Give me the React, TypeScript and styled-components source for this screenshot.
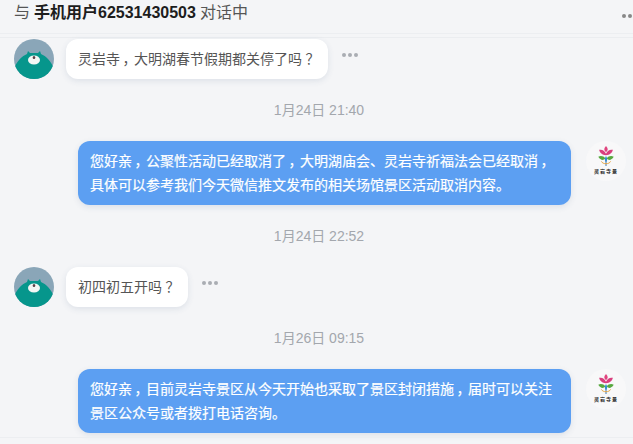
import React from 'react'
import styled, { createGlobalStyle } from 'styled-components'

const GlobalStyle = createGlobalStyle`
  html, body {
    margin: 0;
    padding: 0;
    background: #f4f5f7;
  }
  * {
    box-sizing: border-box;
  }
`

const Page = styled.div`
  position: relative;
  width: 633px;
  height: 444px;
  overflow: hidden;
  background: #f4f5f7;
  font-family: 'Liberation Sans', 'Noto Sans CJK SC', sans-serif;
  display: flex;
  flex-direction: column;
`

const Header = styled.div`
  height: 38px;
  flex: none;
  display: flex;
  align-items: flex-start;
  justify-content: space-between;
  padding: 3px 0 0 14px;
  border-bottom: 1px solid #ebedf0;
  box-shadow: inset 0 -3px 0 #f4f5f7, inset 0 -4px 0 #eceef1;
`

const Title = styled.div`
  font-size: 16px;
  line-height: 20px;
  color: #555;
  b {
    color: #1d1d1d;
    font-weight: 700;
    margin: 0 4px;
  }
`

const HeaderMore = styled.div`
  width: 11px;
  padding-top: 11px;
  display: flex;
  gap: 2px;
  span {
    width: 4px;
    height: 4px;
    flex: none;
    border-radius: 50%;
    background: #888;
  }
`

const List = styled.div`
  display: flex;
  flex-direction: column;
  padding: 1px 7px 0 14px;
`

const Row = styled.div<{ $mine?: boolean }>`
  display: flex;
  align-items: flex-start;
  justify-content: ${(p) => (p.$mine ? 'flex-end' : 'flex-start')};
  gap: ${(p) => (p.$mine ? '15px' : '12px')};
`

const Bubble = styled.div<{ $mine?: boolean }>`
  min-height: 40px;
  padding: ${(p) => (p.$mine ? '9px 12px 8px' : '9px 12px')};
  border-radius: 12px;
  font-size: 14px;
  line-height: ${(p) => (p.$mine ? '23.5px' : '22px')};
  color: ${(p) => (p.$mine ? '#fff' : '#555')};
  background: ${(p) => (p.$mine ? '#5c9ff2' : '#fff')};
  box-shadow: 0 2px 6px rgba(60, 80, 120, 0.12);
  ${(p) => (p.$mine ? 'width: 493px; -webkit-text-stroke: 0.2px #fff;' : '')}
`

const Line = styled.span`
  display: block;
  white-space: nowrap;
`

// the full-width comma sits in the middle of its cell in the reference
const Comma = styled.span`
  display: inline-block;
  width: 1em;
  text-align: center;
  font-feature-settings: 'palt';
`

const More = styled.div`
  display: flex;
  gap: 2px;
  margin: 14px 0 0 2px;
  span {
    width: 4px;
    height: 4px;
    border-radius: 50%;
    background: #a9adb3;
  }
`

const Time = styled.div<{ $gap: number }>`
  text-align: center;
  font-size: 14px;
  line-height: 20px;
  color: #a3a7ad;
  padding-right: 2px;
  margin: ${(p) => p.$gap}px 0 21px;
`

const Logo = styled.div`
  width: 40px;
  height: 40px;
  flex: none;
  display: flex;
  flex-direction: column;
  align-items: center;
  padding-top: 3px;
  border-radius: 50%;
  background: #f8f8f9;
  svg {
    display: block;
  }
`

const LogoName = styled.span`
  font-size: 5px;
  line-height: 7px;
  letter-spacing: 1px;
  font-weight: 700;
  color: #222;
  white-space: nowrap;
`

const FooterLine = styled.div`
  position: absolute;
  left: 0;
  right: 0;
  top: 437px;
  height: 1px;
  background: #eceef1;
`

const Avatar = () => (
  <svg width="40" height="40" viewBox="0 0 40 40" style={{ flex: 'none', display: 'block' }}>
    <defs>
      <clipPath id="avatar-clip">
        <circle cx="20" cy="20" r="20" />
      </clipPath>
    </defs>
    <g clipPath="url(#avatar-clip)">
      <rect width="40" height="40" fill="#8aa6b8" />
      <path d="M-2 42 C-2 27 6 18 13 15 L14 12 L16 14 L24 14 L26 12 L27 15 C34 18 42 27 42 42 Z" fill="#06968c" />
      <ellipse cx="20" cy="21" rx="6" ry="4.5" fill="#f3f6f4" />
      <ellipse cx="20" cy="18.5" rx="1.3" ry="1.6" fill="#5a3f45" />
    </g>
  </svg>
)

const FlowerLogo = () => (
  <Logo>
    <svg width="20" height="24" viewBox="0 0 26 28">
      <path d="M13 1 C16 4 16 7 13 9 C10 7 10 4 13 1 Z" fill="#e0457f" />
      <path d="M4 6 C8 5 11 7 13 11 C15 7 18 5 22 6 C21 10 18 13 13 13 C8 13 5 10 4 6 Z" fill="#d93f7e" />
      <path d="M3 15 C6 13 10 14 12 17 C10 20 6 20 3 15 Z" fill="#58a83f" />
      <path d="M23 15 C20 13 16 14 14 17 C16 20 20 20 23 15 Z" fill="#58a83f" />
      <path d="M13 14 C15 17 15 20 13 22 C11 20 11 17 13 14 Z" fill="#2f8fd0" />
      <path d="M13 20 L13 27" stroke="#2b6cb0" strokeWidth="1.2" />
      <path d="M7 21 C8 23 10 24 13 24 C16 24 18 23 19 21" stroke="#e3a13a" strokeWidth="1.2" fill="none" />
    </svg>
    <LogoName>灵岩寺景</LogoName>
  </Logo>
)

const Dots = () => (
  <More>
    <span />
    <span />
    <span />
  </More>
)

export default function App() {
  return (
    <Page>
      <GlobalStyle />
      <Header>
        <Title>
          与<b>手机用户62531430503</b>对话中
        </Title>
        <HeaderMore>
          <span />
          <span />
          <span />
        </HeaderMore>
      </Header>
      <List>
        <Row>
          <Avatar />
          <Bubble>灵岩寺<Comma>，</Comma>大明湖春节假期都关停了吗<Comma>？</Comma></Bubble>
          <Dots />
        </Row>
        <Time $gap={21}>1月24日 21:40</Time>
        <Row $mine>
          <Bubble $mine>
            <Line>您好亲<Comma>，</Comma>公聚性活动已经取消了<Comma>，</Comma>大明湖庙会、灵岩寺祈福法会已经取消<Comma>，</Comma></Line>
            <Line>具体可以参考我们今天微信推文发布的相关场馆景区活动取消内容。</Line>
          </Bubble>
          <FlowerLogo />
        </Row>
        <Time $gap={21}>1月24日 22:52</Time>
        <Row>
          <Avatar />
          <Bubble>初四初五开吗<Comma>？</Comma></Bubble>
          <Dots />
        </Row>
        <Time $gap={21}>1月26日 09:15</Time>
        <Row $mine>
          <Bubble $mine>
            <Line>您好亲<Comma>，</Comma>目前灵岩寺景区从今天开始也采取了景区封闭措施<Comma>，</Comma>届时可以关注</Line>
            <Line>景区公众号或者拨打电话咨询。</Line>
          </Bubble>
          <FlowerLogo />
        </Row>
      </List>
      <FooterLine />
    </Page>
  )
}
